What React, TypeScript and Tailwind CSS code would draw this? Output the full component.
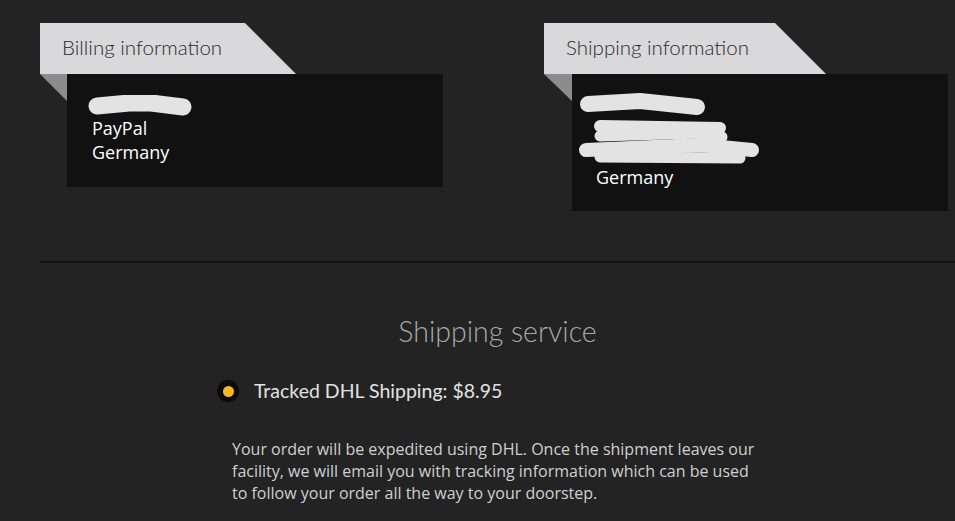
export default function App() {
  const heading = { fontFamily: 'Lato, "Open Sans", sans-serif' };
  const body = { fontFamily: '"Open Sans", "Liberation Sans", sans-serif' };

  return (
    <div className="w-[955px] h-[521px] bg-[#232323] overflow-hidden pt-[23px]">
      {/* Billing + shipping cards */}
      <div className="flex pl-[40px]">
        {/* Billing */}
        <div className="w-[504px]">
          <div
            className="w-[256px] h-[51px] bg-[#d9d9db] flex items-center pl-[22px] pb-[3px] text-[20.5px] font-light text-[#2a2a2a]"
            style={{ ...heading, clipPath: 'polygon(0 0, 205px 0, 100% 100%, 0 100%)' }}
          >
            Billing information
          </div>
          <div className="flex">
            <div className="w-[27px] h-[27px] bg-[#8c8c8c] [clip-path:polygon(0_0,100%_0,100%_100%)]" />
            <div className="w-[376px] h-[113px] bg-[#111111] pt-[21px]">
              <svg width="140" height="21" className="block">
                <g stroke="#e3e3e3" strokeLinecap="round" strokeLinejoin="round" fill="none">
                  <path d="M30 11 L62 8 L84 8 L116 12" strokeWidth="17" />
                  <path d="M60 5 L88 4" strokeWidth="8" />
                </g>
              </svg>
              <div className="pl-[25px] text-[18px] leading-[24px] font-medium text-white" style={body}>
                <div>PayPal</div>
                <div>Germany</div>
              </div>
            </div>
          </div>
        </div>

        {/* Shipping */}
        <div>
          <div
            className="w-[282px] h-[51px] bg-[#d9d9db] flex items-center pl-[22px] pb-[3px] text-[20.5px] font-light text-[#2a2a2a]"
            style={{ ...heading, clipPath: 'polygon(0 0, 231px 0, 100% 100%, 0 100%)' }}
          >
            Shipping information
          </div>
          <div className="flex">
            <div className="w-[28px] h-[27px] bg-[#8c8c8c] [clip-path:polygon(0_0,100%_0,100%_100%)]" />
            <div className="w-[376px] h-[137px] bg-[#111111] pt-[19px]">
              <svg width="200" height="72" className="block">
                <g stroke="#e3e3e3" strokeLinecap="round" strokeLinejoin="round" fill="none">
                  <path d="M16 11 L68 8 L125 14" strokeWidth="16" />
                  <path d="M28 33 L148 35" strokeWidth="12" />
                  <path d="M28 43 L128 40 L150 44" strokeWidth="11" />
                  <path d="M14 57 L128 52 L180 57" strokeWidth="14" />
                  <path d="M28 64 L168 65" strokeWidth="11" />
                </g>
              </svg>
              <div className="pl-[24px] text-[18px] leading-[24px] font-medium text-white" style={body}>
                Germany
              </div>
            </div>
          </div>
        </div>
      </div>

      {/* Divider */}
      <div className="ml-[40px] mt-[50px] h-[2px] bg-[#101010]" />

      {/* Shipping service */}
      <div className="pl-[40px]">
        <h2 className="mt-[52px] text-center text-[28.5px] leading-[32px] font-light text-[#a9a9a9]" style={heading}>
          Shipping service
        </h2>
        <div className="mt-[33px] ml-[177px] flex items-center gap-[15px] h-[22px]">
          <div className="w-[22px] h-[22px] rounded-full bg-[#0b0b0b] flex items-center justify-center">
            <div className="w-[11px] h-[11px] rounded-full bg-[#f4b825]" />
          </div>
          <span className="text-[19.5px] text-[#e2e2e2]" style={heading}>
            Tracked DHL Shipping: $8.95
          </span>
        </div>
        <p className="mt-[36px] ml-[192px] text-[16px] leading-[22px] text-[#d0d0d0]" style={body}>
          Your order will be expedited using DHL. Once the shipment leaves our
          <br />
          facility, we will email you with tracking information which can be used
          <br />
          to follow your order all the way to your doorstep.
        </p>
      </div>
    </div>
  );
}
